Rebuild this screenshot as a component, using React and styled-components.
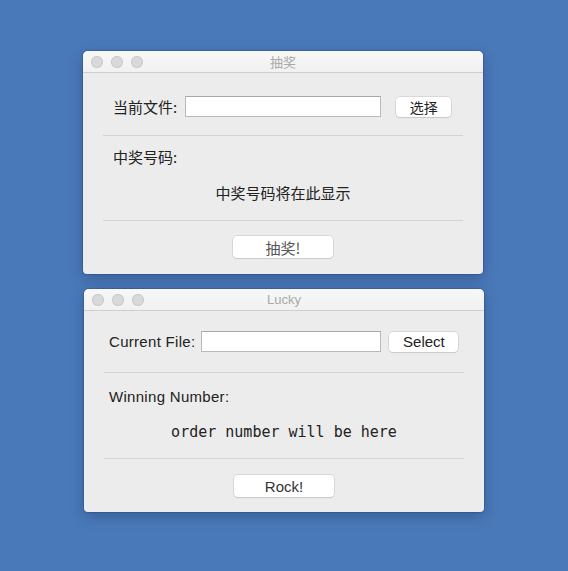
import styled, { createGlobalStyle } from "styled-components";

const GlobalStyle = createGlobalStyle`
  html, body {
    margin: 0;
    padding: 0;
    background: #4a79b9;
  }
  body {
    font-family: "Liberation Sans", "Noto Sans CJK SC", sans-serif;
    color: #222;
  }
`;

const Desktop = styled.div`
  width: 568px;
  height: 571px;
  padding: 51px 0 0 83px;
  box-sizing: border-box;
  display: flex;
  flex-direction: column;
  gap: 15px;
`;

const Window = styled.div`
  width: 400px;
  margin-left: ${(p) => p.$shift || 0}px;
  background: #ececec;
  border-radius: 5px 5px 4px 4px;
  box-shadow: 0 0 0 1px rgba(40, 70, 120, 0.35), 0 4px 14px rgba(20, 40, 80, 0.35);
  overflow: hidden;
`;

const TitleBar = styled.div`
  height: 21px;
  border-bottom: 1px solid #cfcfcf;
  background: linear-gradient(#f7f7f7, #f1f1f1);
  display: flex;
  align-items: center;
  position: relative;
`;

const Lights = styled.div`
  display: flex;
  gap: 8px;
  padding-left: ${(p) => p.$left}px;
`;

const Light = styled.span`
  width: 12px;
  height: 12px;
  border-radius: 50%;
  background: #d9d9d9;
  box-shadow: inset 0 0 0 1px #cbcbcb;
`;

const Title = styled.div`
  position: absolute;
  left: 0;
  right: 0;
  text-align: center;
  font-size: 13px;
  color: #a9a9a9;
  font-family: ${(p) => (p.$cjk ? `"Noto Sans CJK SC", sans-serif` : `"Liberation Sans", sans-serif`)};
`;

const Body = styled.div`
  padding: ${(p) => p.$top}px 20px ${(p) => p.$bottom}px;
  display: flex;
  flex-direction: column;
`;

const FileRow = styled.div`
  display: flex;
  align-items: center;
  padding-left: ${(p) => p.$left}px;
  height: 21px;
`;

const Label = styled.span`
  font-size: 15px;
  line-height: 20px;
  letter-spacing: ${(p) => (p.$cjk ? 0 : 0.3)}px;
  font-family: ${(p) => (p.$cjk ? `"Noto Sans CJK SC", sans-serif` : `"Liberation Sans", sans-serif`)};
  white-space: nowrap;
`;

const Field = styled.div`
  width: ${(p) => p.$w}px;
  height: 21px;
  box-sizing: border-box;
  margin-left: ${(p) => p.$gap}px;
  background: #fff;
  border: 1px solid #b9b9b9;
  border-top-color: #a9a9a9;
`;

const Button = styled.button`
  width: ${(p) => p.$w}px;
  height: ${(p) => p.$h || 20}px;
  margin-left: ${(p) => p.$gap || 0}px;
  padding: 0;
  background: #fff;
  border: none;
  border-radius: 4px;
  box-shadow: 0 0 0 0.5px #c4c4c4, 0 1px 1px rgba(0, 0, 0, 0.12);
  font-size: ${(p) => p.$size || 14}px;
  color: ${(p) => p.$color || "#222"};
  font-family: ${(p) => (p.$cjk ? `"Noto Sans CJK SC", sans-serif` : `"Liberation Sans", sans-serif`)};
  line-height: 1;
`;

const Divider = styled.div`
  height: 1px;
  background: #d3d3d3;
  margin-top: ${(p) => p.$top}px;
`;

const Section = styled.div`
  padding-left: ${(p) => p.$left}px;
  margin-top: ${(p) => p.$top}px;
`;

const Result = styled.div`
  margin-top: ${(p) => p.$top}px;
  text-align: center;
  font-size: 15px;
  line-height: 20px;
  color: #222;
  font-family: ${(p) =>
    p.$mono ? `"DejaVu Sans Mono", monospace` : `"Noto Sans CJK SC", sans-serif`};
`;

const Footer = styled.div`
  display: flex;
  justify-content: center;
  margin-top: ${(p) => p.$top}px;
`;

const TrafficLights = ({ left }) => (
  <Lights $left={left}>
    <Light />
    <Light />
    <Light />
  </Lights>
);

export default function App() {
  return (
    <>
      <GlobalStyle />
      <Desktop>
        <Window>
          <TitleBar>
            <TrafficLights left={8} />
            <Title $cjk>抽奖</Title>
          </TitleBar>
          <Body $top={23} $bottom={16}>
            <FileRow $left={10}>
              <Label $cjk>当前文件:</Label>
              <Field $w={196} $gap={8} />
              <Button $w={55} $gap={15} $cjk $size={14}>
                选择
              </Button>
            </FileRow>
            <Divider $top={18} />
            <Section $left={10} $top={11}>
              <Label $cjk>中奖号码:</Label>
            </Section>
            <Result $top={16}>中奖号码将在此显示</Result>
            <Divider $top={17} />
            <Footer $top={15}>
              <Button $w={100} $h={22} $cjk $size={15} $color="#555">
                抽奖!
              </Button>
            </Footer>
          </Body>
        </Window>
        <Window $shift={1}>
          <TitleBar>
            <TrafficLights left={8} />
            <Title>Lucky</Title>
          </TitleBar>
          <Body $top={20} $bottom={15}>
            <FileRow $left={5}>
              <Label>Current File:</Label>
              <Field $w={180} $gap={6} />
              <Button $w={69} $gap={8} $size={15}>
                Select
              </Button>
            </FileRow>
            <Divider $top={20} />
            <Section $left={5} $top={14}>
              <Label>Winning Number:</Label>
            </Section>
            <Result $mono $top={15}>
              order number will be here
            </Result>
            <Divider $top={16} />
            <Footer $top={16}>
              <Button $w={100} $h={22} $size={15} $color="#333">
                Rock!
              </Button>
            </Footer>
          </Body>
        </Window>
      </Desktop>
    </>
  );
}
